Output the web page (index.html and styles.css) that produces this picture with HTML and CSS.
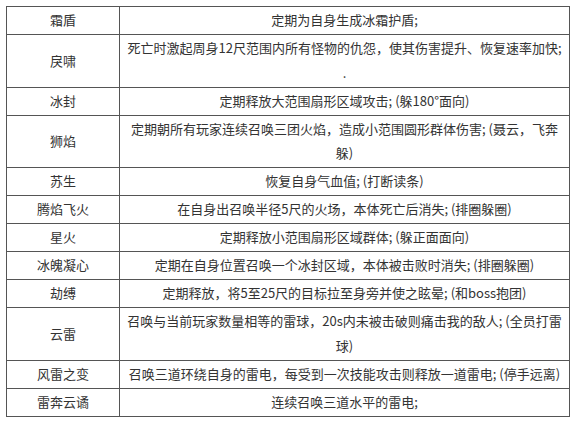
FILE: index.html
```html
<!DOCTYPE html>
<html lang="zh">
<head>
<meta charset="utf-8">
<link rel="stylesheet" href="styles.css">
</head>
<body>
<table class="skills">
  <tr class="single"><td class="name">霜盾</td><td class="desc">定期为自身生成冰霜护盾;</td></tr>
  <tr class="double"><td class="name">戾啸</td><td class="desc">死亡时激起周身12尺范围内所有怪物的仇怨，使其伤害提升、恢复速率加快;<br>.</td></tr>
  <tr class="single"><td class="name">冰封</td><td class="desc">定期释放大范围扇形区域攻击; (躲180°面向)</td></tr>
  <tr class="double"><td class="name">狮焰</td><td class="desc">定期朝所有玩家连续召唤三团火焰，造成小范围圆形群体伤害; (聂云，飞奔<br>躲)</td></tr>
  <tr class="single"><td class="name">苏生</td><td class="desc">恢复自身气血值; (打断读条)</td></tr>
  <tr class="single"><td class="name">腾焰飞火</td><td class="desc">在自身出召唤半径5尺的火场，本体死亡后消失; (排圈躲圈)</td></tr>
  <tr class="single"><td class="name">星火</td><td class="desc">定期释放小范围扇形区域群体; (躲正面面向)</td></tr>
  <tr class="single"><td class="name">冰魄凝心</td><td class="desc">定期在自身位置召唤一个冰封区域，本体被击败时消失; (排圈躲圈)</td></tr>
  <tr class="single"><td class="name">劫缚</td><td class="desc">定期释放，将5至25尺的目标拉至身旁并使之眩晕; (和boss抱团)</td></tr>
  <tr class="double"><td class="name">云雷</td><td class="desc">召唤与当前玩家数量相等的雷球，20s内未被击破则痛击我的敌人; (全员打雷<br>球)</td></tr>
  <tr class="single"><td class="name">风雷之变</td><td class="desc">召唤三道环绕自身的雷电，每受到一次技能攻击则释放一道雷电; (停手远离)</td></tr>
  <tr class="single"><td class="name">雷奔云谲</td><td class="desc">连续召唤三道水平的雷电;</td></tr>
</table>
</body>
</html>
```
FILE: styles.css
```css
html, body {
  margin: 0;
  padding: 0;
  background: #ffffff;
}
body {
  padding: 6px 0 0 6px;
  font-family: "Noto Sans CJK SC", "Noto Sans", sans-serif;
  font-size: 13px;
  color: #333333;
}
.skills {
  border-collapse: collapse;
  width: 564px;
  table-layout: fixed;
}
.skills td {
  border: 1px solid #555555;
  text-align: center;
  vertical-align: middle;
  line-height: 24.5px;
  padding: 1.25px 2px;
  white-space: nowrap;
}
.skills td.name {
  width: 108px;
}
.single td {
  height: 24.5px;
}
```
